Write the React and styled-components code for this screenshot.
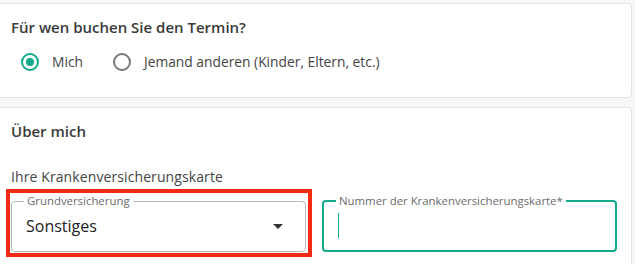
import React from "react";
import styled, { createGlobalStyle } from "styled-components";

const GlobalStyle = createGlobalStyle`
  body {
    margin: 0;
    background: #f7f7f7;
    font-family: "Open Sans", "Lato", sans-serif;
    color: #3c3c3c;
  }
`;

const TEAL = "#13a98b";

const Page = styled.div`
  display: flex;
  flex-direction: column;
  gap: 9px;
  padding: 3px 3px 0 0;
  margin-left: -2px;
  height: 261px;
  overflow: hidden;
`;

const Card = styled.section`
  background: #fff;
  border: 1px solid #e3e3e3;
  border-radius: 4px;
  padding: ${({ $padding }) => $padding};
  flex-shrink: 0;
  height: ${({ $height }) => $height || "auto"};
  box-sizing: border-box;
`;

const Title = styled.h2`
  margin: 0;
  font-size: 15px;
  font-weight: 600;
  line-height: 20px;
  color: #3a3a3a;
`;

const RadioRow = styled.div`
  display: flex;
  align-items: center;
  gap: 30px;
  margin-top: 15px;
  padding-left: 10px;
`;

const RadioOption = styled.label`
  display: flex;
  align-items: center;
  gap: 13px;
  font-size: 13.8px;
  color: #444;
`;

const RadioCircle = styled.span`
  width: 18px;
  height: 18px;
  box-sizing: border-box;
  border-radius: 50%;
  border: 2px solid ${({ $checked }) => ($checked ? TEAL : "#777")};
  display: flex;
  align-items: center;
  justify-content: center;

  &::after {
    content: "";
    width: 8px;
    height: 8px;
    border-radius: 50%;
    background: ${TEAL};
    display: ${({ $checked }) => ($checked ? "block" : "none")};
  }
`;

const SubTitle = styled.p`
  margin: 0;
  font-size: 14px;
  letter-spacing: 0.1px;
  line-height: 20px;
  color: #444;
  margin-top: ${({ $top }) => $top || "0"};
`;

const FieldGrid = styled.div`
  display: grid;
  grid-template-columns: 295px 295px;
  gap: 16px;
  margin-top: 8px;
`;

const Highlight = styled.div`
  position: relative;

  &::after {
    content: "";
    position: absolute;
    left: -5px;
    right: -6px;
    top: -6px;
    bottom: -5px;
    border: 4px solid #f42a12;
    pointer-events: none;
  }
`;

const Field = styled.fieldset`
  margin: 0;
  height: 57px;
  box-sizing: border-box;
  border: ${({ $focused }) => ($focused ? `2px solid ${TEAL}` : "1px solid #b9b9b9")};
  border-radius: 4px;
  padding: 0 ${({ $focused }) => ($focused ? "13px" : "14px")};
  display: flex;
  align-items: center;
`;

const Legend = styled.legend`
  font-size: 11.4px;
  line-height: 12px;
  color: #6b6b6b;
  padding: 0 3px;
  margin-left: ${({ $focused }) => ($focused ? "-1px" : "-2px")};
`;

const Value = styled.span`
  flex: 1;
  font-size: 16px;
  color: #222;
  margin-top: -6px;
`;

const Caret = styled.span`
  width: 1px;
  height: 25px;
  background: ${TEAL};
  margin-top: -6px;
  margin-left: 1px;
`;

const Arrow = () => (
  <svg width="10" height="5" viewBox="0 0 10 5" style={{ marginTop: "-6px", marginRight: "8px" }}>
    <path d="M0 0 L10 0 L5 5 Z" fill="#333" />
  </svg>
);

export default function App() {
  return (
    <>
      <GlobalStyle />
      <Page>
        <Card $padding="13px 12px" $height="95px">
          <Title>Für wen buchen Sie den Termin?</Title>
          <RadioRow>
            <RadioOption>
              <RadioCircle $checked />
              Mich
            </RadioOption>
            <RadioOption>
              <RadioCircle />
              Jemand anderen (Kinder, Eltern, etc.)
            </RadioOption>
          </RadioRow>
        </Card>
        <Card $padding="13px 12px" $height="200px">
          <Title>Über mich</Title>
          <SubTitle $top="26px">Ihre Krankenversicherungskarte</SubTitle>
          <FieldGrid>
            <Highlight>
              <Field>
                <Legend>Grundversicherung</Legend>
                <Value>Sonstiges</Value>
                <Arrow />
              </Field>
            </Highlight>
            <Field $focused>
              <Legend $focused>Nummer der Krankenversicherungskarte*</Legend>
              <Caret />
            </Field>
          </FieldGrid>
        </Card>
      </Page>
    </>
  );
}
